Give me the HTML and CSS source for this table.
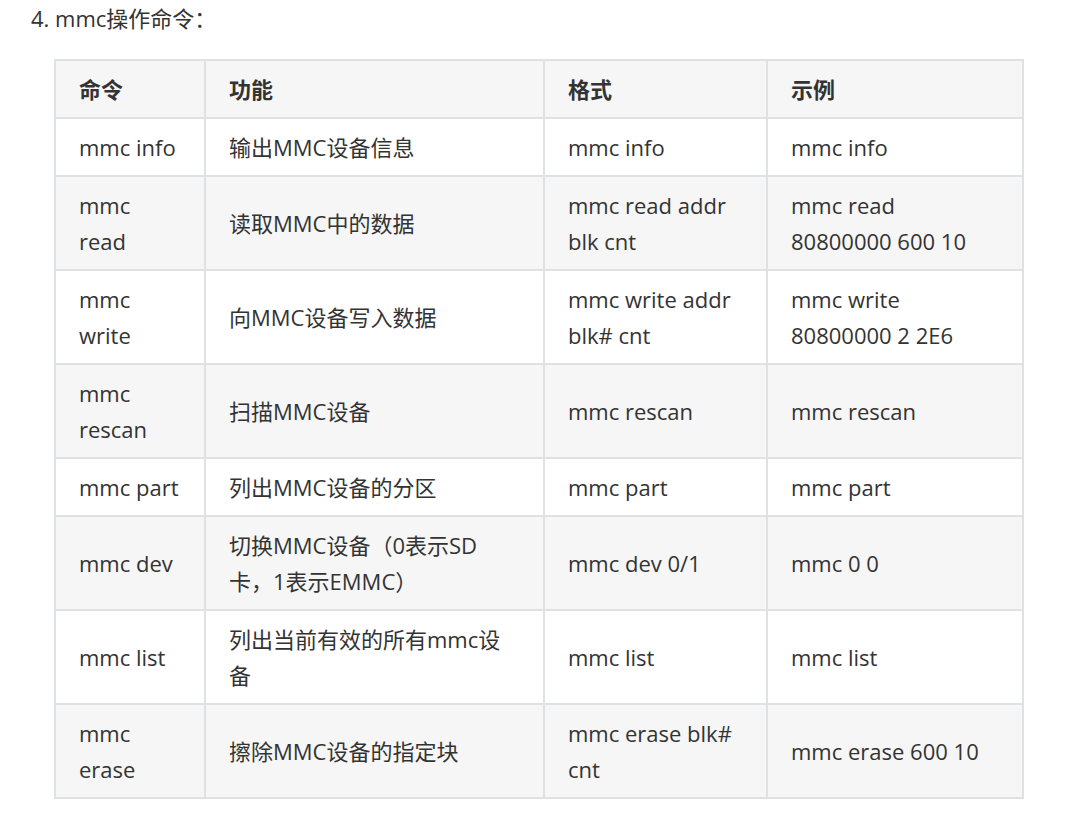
FILE: index.html
```html
<!DOCTYPE html>
<html lang="zh-CN">
<head>
<meta charset="utf-8">
<title>mmc操作命令</title>
<link rel="stylesheet" href="styles.css">
</head>
<body>
<div class="doc">
  <p class="item">4. mmc操作命令：</p>
  <div class="table-wrap">
    <table class="cmd-table">
      <colgroup>
        <col class="c1"><col class="c2"><col class="c3"><col class="c4">
      </colgroup>
      <thead>
        <tr><th>命令</th><th>功能</th><th>格式</th><th>示例</th></tr>
      </thead>
      <tbody>
        <tr><td>mmc info</td><td>输出MMC设备信息</td><td>mmc info</td><td>mmc info</td></tr>
        <tr><td>mmc read</td><td>读取MMC中的数据</td><td>mmc read addr blk cnt</td><td>mmc read 80800000 600 10</td></tr>
        <tr><td>mmc write</td><td>向MMC设备写入数据</td><td>mmc write addr blk# cnt</td><td>mmc write 80800000 2 2E6</td></tr>
        <tr><td>mmc rescan</td><td>扫描MMC设备</td><td>mmc rescan</td><td>mmc rescan</td></tr>
        <tr><td>mmc part</td><td>列出MMC设备的分区</td><td>mmc part</td><td>mmc part</td></tr>
        <tr><td>mmc dev</td><td>切换MMC设备（0表示SD卡，1表示EMMC）</td><td>mmc dev 0/1</td><td>mmc 0 0</td></tr>
        <tr><td>mmc list</td><td>列出当前有效的所有mmc设备</td><td>mmc list</td><td>mmc list</td></tr>
        <tr><td>mmc erase</td><td>擦除MMC设备的指定块</td><td>mmc erase blk# cnt</td><td>mmc erase 600 10</td></tr>
      </tbody>
    </table>
  </div>
</div>
</body>
</html>
```

FILE: styles.css
```css
html, body {
  margin: 0;
  padding: 0;
  background: #ffffff;
}

body {
  font-family: "Open Sans", "Noto Sans CJK SC", sans-serif;
  font-size: 22px;
  line-height: 36px;
  color: #333333;
}

.doc {
  padding: 0 0 0 31px;
}

.item {
  margin: 0;
  padding: 0;
  line-height: 36px;
}

.table-wrap {
  padding: 23px 0 0 23px;
}

.cmd-table {
  border-collapse: collapse;
  table-layout: fixed;
  width: 968px;
}

.c1 { width: 150px; }
.c2 { width: 339px; }
.c3 { width: 223px; }
.c4 { width: 256px; }

.cmd-table th,
.cmd-table td {
  border: 2px solid #dfe2e5;
  padding: 10px 23px;
  text-align: left;
  vertical-align: middle;
  word-wrap: break-word;
}

.cmd-table th {
  font-weight: 700;
  background: #f6f6f6;
}

.cmd-table tbody tr:nth-child(even) td {
  background: #f6f6f6;
}

.cmd-table tbody tr:nth-child(odd) td {
  background: #ffffff;
}
```
